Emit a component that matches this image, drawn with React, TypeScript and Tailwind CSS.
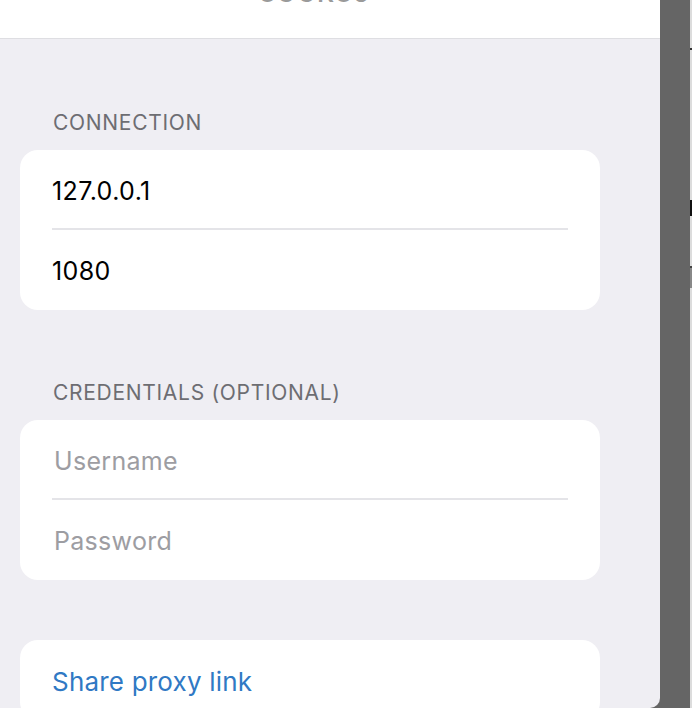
import React from "react";

function Row({ children, divider }: { children: React.ReactNode; divider?: boolean }) {
  return (
    <div className="relative h-[80px] flex items-center px-[32px] pt-[3px]">
      {children}
      {divider && <div className="absolute left-[32px] right-[32px] bottom-0 h-[2px] bg-[#e4e4e8]" />}
    </div>
  );
}

export default function App() {
  return (
    <div
      className="w-[692px] h-[708px] flex overflow-hidden bg-[#656565]"
      style={{ fontFamily: "Inter, 'Noto Sans', sans-serif" }}
    >
      <div className="w-[660px] h-[708px] bg-[#efeef3] flex flex-col rounded-br-[10px] overflow-hidden">
        <div className="h-[39px] bg-white border-b border-[#dedee2] relative overflow-hidden shrink-0">
          <div className="absolute left-[-30px] right-0 top-[-20px] text-center text-[24px] leading-[28px] font-semibold tracking-[2px] text-[#9a9a9a]">
            SOCKS5
          </div>
        </div>
        <div className="px-[20px] pt-[72px] flex flex-col">
          <div className="pl-[33px] h-[24px] text-[21px] leading-[24px] text-[#6d6d72] tracking-[0.7px]">CONNECTION</div>
          <div className="mt-[15px] bg-white rounded-[18px] w-[580px] flex flex-col">
            <Row divider>
              <span className="text-[25px] tracking-[0.4px] text-black">127.0.0.1</span>
            </Row>
            <Row>
              <span className="text-[25px] tracking-[0.4px] text-black">1080</span>
            </Row>
          </div>
          <div className="mt-[71px] pl-[33px] h-[24px] text-[21px] leading-[24px] text-[#6d6d72] tracking-[0.7px]">CREDENTIALS (OPTIONAL)</div>
          <div className="mt-[15px] bg-white rounded-[18px] w-[580px] flex flex-col">
            <Row divider>
              <span className="pl-[2px] text-[25px] tracking-[0.3px] text-[#9d9da2]">Username</span>
            </Row>
            <Row>
              <span className="pl-[2px] text-[25px] tracking-[0.3px] text-[#9d9da2]">Password</span>
            </Row>
          </div>
          <div className="mt-[60px] bg-white rounded-[18px] w-[580px] flex flex-col">
            <Row>
              <span className="text-[26px] tracking-[0.2px] text-[#3079c4]">Share proxy link</span>
            </Row>
          </div>
        </div>
      </div>
      <div className="w-[30px] shrink-0" />
      <div className="w-[2px] h-[708px] bg-[#dcdcdc] flex flex-col shrink-0">
        <div className="h-[48px]" />
        <div className="h-[2px] bg-[#333]" />
        <div className="h-[150px]" />
        <div className="h-[16px] bg-[#111]" />
        <div className="h-[50px]" />
        <div className="h-[2px] bg-[#444]" />
        <div className="h-[20px] bg-[#888]" />
      </div>
    </div>
  );
}
